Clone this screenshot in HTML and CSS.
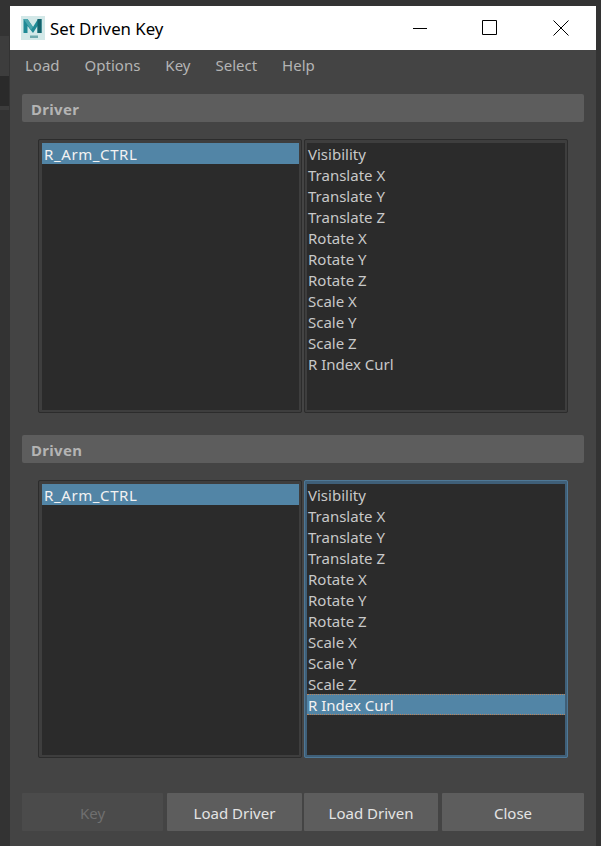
FILE: index.html
```html
<!DOCTYPE html>
<html lang="en">
<head>
    <meta charset="UTF-8">
    <meta name="viewport" content="width=device-width, initial-scale=1.0">
    <title>Set Driven Key</title>
    <link rel="stylesheet" href="styles.css">
</head>
<body>
    <div class="window">
        <div class="titlebar">
            <svg class="app-icon" width="24" height="24" viewBox="0 0 24 24">
                <rect width="24" height="24" fill="#d3e8e8"/>
                <path d="M2.5 17V3h4l5.500 8 5-8h3.500v14h-4V10l-4.500 7-5.500-7v7z" fill="#1f8a96"/>
                <path d="M16.500 3h4v14h-4V10z" fill="#14626c"/>
                <path d="M2.500 3h4l5.500 8-2 3z" fill="#4aa6ae"/>
                <rect x="9" y="19.500" width="8" height="2.500" fill="#6fa9ad"/>
            </svg>
            <span class="title">Set Driven Key</span>
            <div class="win-controls">
                <svg width="16" height="16" viewBox="0 0 16 16"><path d="M2 8.500h14" stroke="#000" fill="none"/></svg>
                <svg width="16" height="16" viewBox="0 0 16 16"><path d="M.5.500h14v14H.5z" stroke="#000" fill="none"/></svg>
                <svg width="16" height="16" viewBox="0 0 16 16"><path d="M.5.500l15 15M15.500.500l-15 15" stroke="#000" fill="none"/></svg>
            </div>
        </div>

        <div class="menubar">
            <span>Load</span>
            <span>Options</span>
            <span>Key</span>
            <span>Select</span>
            <span>Help</span>
        </div>

        <div class="section-head">Driver</div>
        <div class="lists lists-driver">
            <div class="list list-nodes">
                <div class="row selected node">R_Arm_CTRL</div>
            </div>
            <div class="list list-attrs">
                <div class="row">Visibility</div>
                <div class="row">Translate X</div>
                <div class="row">Translate Y</div>
                <div class="row">Translate Z</div>
                <div class="row">Rotate X</div>
                <div class="row">Rotate Y</div>
                <div class="row">Rotate Z</div>
                <div class="row">Scale X</div>
                <div class="row">Scale Y</div>
                <div class="row">Scale Z</div>
                <div class="row">R Index Curl</div>
            </div>
        </div>

        <div class="section-head">Driven</div>
        <div class="lists lists-driven">
            <div class="list list-nodes">
                <div class="row selected node">R_Arm_CTRL</div>
            </div>
            <div class="list list-attrs focused">
                <div class="row">Visibility</div>
                <div class="row">Translate X</div>
                <div class="row">Translate Y</div>
                <div class="row">Translate Z</div>
                <div class="row">Rotate X</div>
                <div class="row">Rotate Y</div>
                <div class="row">Rotate Z</div>
                <div class="row">Scale X</div>
                <div class="row">Scale Y</div>
                <div class="row">Scale Z</div>
                <div class="row selected current">R Index Curl</div>
            </div>
        </div>

        <div class="buttons">
            <button class="btn btn-key" disabled>Key</button>
            <button class="btn btn-driver">Load Driver</button>
            <button class="btn btn-driven">Load Driven</button>
            <button class="btn btn-close">Close</button>
        </div>
    </div>
</body>
</html>
```

FILE: styles.css
```css
html, body {
    margin: 0;
    height: 100%;
}
body {
    width: 601px;
    height: 846px;
    overflow: hidden;
    box-sizing: border-box;
    padding: 6px 5px 0 10px;
    background-color: #333;
    /* strip of the app behind the dialog */
    background-image: linear-gradient(#333 36px, #3d3d3d 36px, #3d3d3d 76px, #2a2a2a 76px, #2a2a2a 106px, #3c3c3c 106px, #3c3c3c 110px, #333 110px);
    background-size: 9px 100%;
    background-repeat: no-repeat;
    font-family: "Noto Sans", "Open Sans", sans-serif;
    font-size: 15px;
}
.window {
    height: 840px;
    background-color: #444;
    color: #c8c8c8;
}
.titlebar {
    height: 44px;
    background-color: #fff;
    display: flex;
    align-items: center;
    padding-left: 11px;
    color: #000;
}
.app-icon {
    margin-right: 5px;
}
.title {
    font-size: 16.8px;
}
.win-controls {
    margin-left: auto;
    display: flex;
    gap: 55px;
    padding-right: 27px;
    margin-top: -1px;
}
.menubar {
    height: 33px;
    box-sizing: border-box;
    padding: 0 0 3px 15px;
    display: flex;
    align-items: center;
    gap: 25px;
    color: #b4b4b4;
}
.section-head {
    height: 28px;
    line-height: 30px;
    margin: 11px 12px 0;
    padding-left: 9px;
    background-color: #5d5d5d;
    border-radius: 2px;
    font-weight: bold;
    letter-spacing: 0.3px;
    color: #b4b4b4;
}
.lists {
    display: flex;
    gap: 2px;
    margin: 17px 0 0 28px;
    width: 530px;
}
.lists-driver {
    height: 274px;
    margin-bottom: 22px;
}
.lists-driven {
    height: 278px;
}
.list {
    box-sizing: border-box;
    background-color: #2b2b2b;
    border: 3px solid #3e3e3e;
    border-top-width: 4px;
    outline: 1px solid #2c2c2c;
    outline-offset: -1px;
    border-radius: 2px;
}
.list-nodes {
    width: 264px;
    border-left-width: 4px;
}
.list-attrs {
    width: 263.5px;
}
.focused {
    border-color: #3f5f78;
    outline-color: #4f7896;
}
.row {
    height: 21px;
    line-height: 23px;
    padding-left: 1px;
    white-space: nowrap;
    color: #c8c8c8;
}
.row.selected {
    background-color: #5285a6;
    color: #f2f2f2;
}
.row.node {
    padding-left: 2px;
    letter-spacing: 0.6px;
}
.row.current {
    box-sizing: border-box;
    line-height: 21px;
    border-top: 1px dotted #b9835c;
    border-bottom: 1px dotted #b9835c;
}
.buttons {
    display: flex;
    margin: 35px 12px 0;
    height: 38px;
}
.btn {
    border: none;
    padding: 1px 0 0;
    border-radius: 1px;
    background-color: #5d5d5d;
    color: #e4e4e4;
    font: inherit;
}
.btn-key {
    width: 141px;
    margin-right: 4px;
    background-color: #4b4b4b;
    color: #6f6f6f;
}
.btn-driver {
    width: 135px;
    margin-right: 2px;
}
.btn-driven {
    width: 134px;
    margin-right: 4px;
}
.btn-close {
    width: 142px;
}
```
